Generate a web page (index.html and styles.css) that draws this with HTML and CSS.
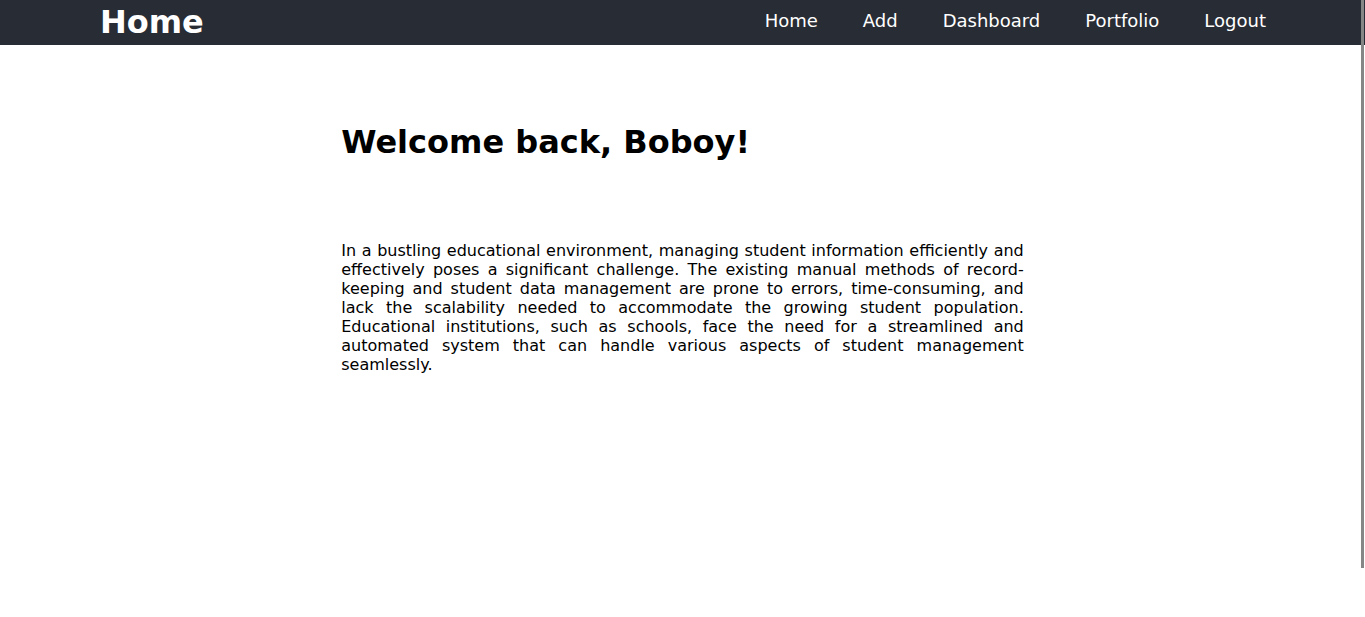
FILE: index.html
```html
<!DOCTYPE html>
<html lang="en">
<head>
<meta charset="utf-8">
<title>Home</title>
<link rel="stylesheet" href="styles.css">
</head>
<body>
  <header class="navbar">
    <a class="brand" href="#">Home</a>
    <nav class="nav-links">
      <a href="#">Home</a>
      <a href="#">Add</a>
      <a href="#">Dashboard</a>
      <a href="#">Portfolio</a>
      <a href="#">Logout</a>
    </nav>
  </header>
  <main class="content">
    <h1 class="welcome">Welcome back, Boboy!</h1>
    <p class="intro">In a bustling educational environment, managing student information efficiently and effectively poses a significant challenge. The existing manual methods of record-keeping and student data management are prone to errors, time-consuming, and lack the scalability needed to accommodate the growing student population. Educational institutions, such as schools, face the need for a streamlined and automated system that can handle various aspects of student management seamlessly.</p>
  </main>
  <div class="scroll-thumb"></div>
</body>
</html>
```

FILE: styles.css
```css
html, body {
  margin: 0;
  padding: 0;
  background: #ffffff;
  font-family: "DejaVu Sans", sans-serif;
  color: #000000;
}

.navbar {
  height: 45px;
  background: #282c34;
  display: flex;
  align-items: center;
  justify-content: space-between;
  padding: 0 99px 0 100px;
}

.brand {
  color: #ffffff;
  font-size: 32px;
  font-weight: bold;
  text-decoration: none;
  margin-top: -2px;
}

.nav-links {
  display: flex;
  gap: 45px;
  margin-top: -5px;
}

.nav-links a {
  color: #ffffff;
  font-size: 18px;
  text-decoration: none;
}

.content {
  width: 50%;
  margin: 0 auto;
  padding-top: 78px;
}

.welcome {
  margin: 0;
  font-size: 32px;
  font-weight: bold;
}

.intro {
  margin: 80px 0 0;
  font-size: 16px;
  text-align: justify;
}

.scroll-thumb {
  position: fixed;
  top: 0;
  right: 1px;
  width: 3px;
  height: 568px;
  background: #868686;
}
```
